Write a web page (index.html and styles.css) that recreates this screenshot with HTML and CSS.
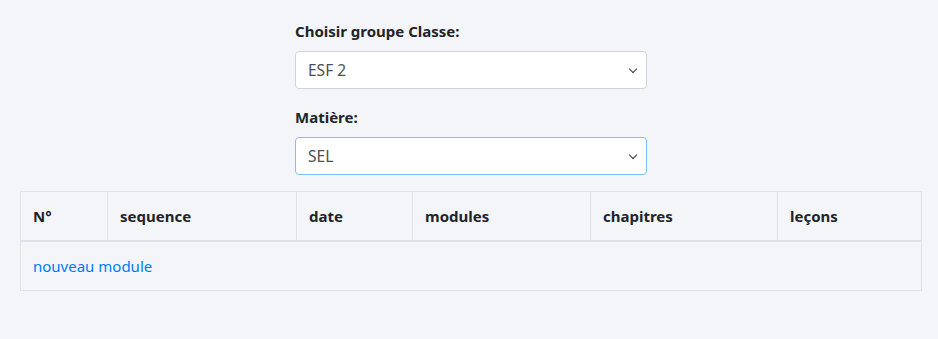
FILE: index.html
```html
<!DOCTYPE html>
<html lang="fr">
  <head>
    <meta charset="UTF-8" />
    <meta name="viewport" content="width=device-width, initial-scale=1.0" />
    <title>Modules</title>
    <link rel="stylesheet" href="styles.css">
  </head>
  <body>
    <div class="page">
      <form class="filters">
        <div class="form-group">
          <label for="classe">Choisir groupe Classe:</label>
          <div class="select-wrap">
            <select id="classe" class="form-control">
              <option>ESF 2</option>
            </select>
          </div>
        </div>
        <div class="form-group">
          <label for="matiere">Matière:</label>
          <div class="select-wrap">
            <select id="matiere" class="form-control focused">
              <option>SEL</option>
            </select>
          </div>
        </div>
      </form>

      <table class="table">
        <thead>
          <tr>
            <th class="c-num">N°</th>
            <th class="c-seq">sequence</th>
            <th class="c-date">date</th>
            <th class="c-mod">modules</th>
            <th class="c-chap">chapitres</th>
            <th class="c-lec">leçons</th>
          </tr>
        </thead>
        <tbody>
          <tr>
            <td colspan="6"><a href="#">nouveau module</a></td>
          </tr>
        </tbody>
      </table>
    </div>
  </body>
</html>
```

FILE: styles.css
```css
* {
  margin: 0;
  padding: 0;
  box-sizing: border-box;
}
body {
  background: #f4f5f8;
  color: #212529;
  font-family: "Noto Sans", "Open Sans", sans-serif;
  font-size: 15px;
  line-height: 24px;
}
.page {
  padding: 19px 17px 0 20px;
}
.filters {
  width: 352px;
  margin-left: 275px;
}
.form-group {
  margin-bottom: 16px;
}
.form-group label {
  display: block;
  font-weight: 700;
  margin-bottom: 8px;
}
.select-wrap {
  position: relative;
}
.select-wrap::after {
  content: "";
  position: absolute;
  right: 11px;
  top: 15px;
  width: 5px;
  height: 5px;
  border-right: 1.5px solid #343a40;
  border-bottom: 1.5px solid #343a40;
  transform: rotate(45deg);
  pointer-events: none;
}
.form-control {
  display: block;
  width: 100%;
  height: 38px;
  padding: 6px 12px;
  font: inherit;
  font-size: 15.5px;
  color: #495057;
  background: #fff;
  border: 1px solid #ced4da;
  border-radius: 4px;
  appearance: none;
  -webkit-appearance: none;
}
.form-control.focused {
  border-color: #80bdff;
}
.table {
  width: 901px;
  border-collapse: collapse;
  table-layout: fixed;
}
.table th,
.table td {
  border: 1px solid #dee2e6;
  padding: 12px;
  text-align: left;
  vertical-align: top;
}
.table thead th {
  border-bottom-width: 2px;
  font-weight: 700;
}
.c-num { width: 87px; }
.c-seq { width: 189px; }
.c-date { width: 116px; }
.c-mod { width: 178px; }
.c-chap { width: 187px; }
.c-lec { width: 144px; }
.table a {
  color: #007bff;
  text-decoration: none;
}
```
